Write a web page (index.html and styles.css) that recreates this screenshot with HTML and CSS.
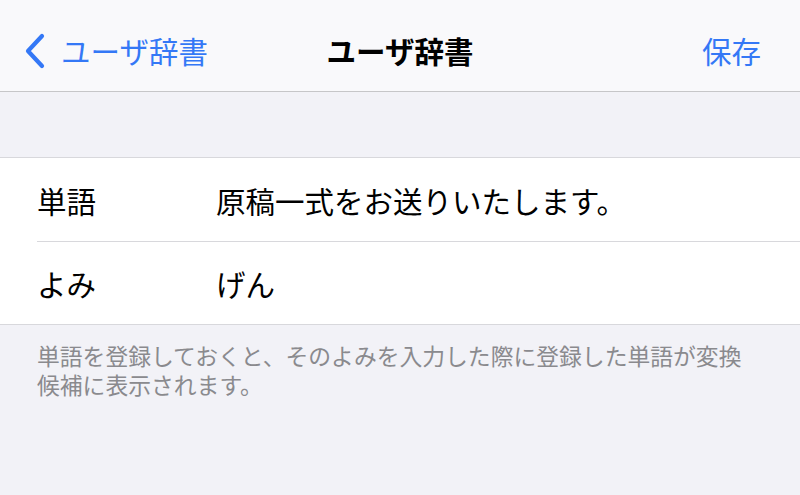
FILE: index.html
```html
<!DOCTYPE html>
<html lang="ja">
<head>
    <meta charset="UTF-8">
    <title>ユーザ辞書</title>
    <link rel="stylesheet" href="styles.css">
</head>
<body>
<div class="nav">
    <a class="back">
        <svg class="chev" width="22" height="36" viewBox="0 0 22 36">
            <path d="M18 3 L4 18 L18 33" fill="none" stroke="#3478f6" stroke-width="4.2" stroke-linecap="round" stroke-linejoin="round"/>
        </svg>
        <span>ユーザ辞書</span>
    </a>
    <h1 class="title">ユーザ辞書</h1>
    <a class="save">保存</a>
</div>
<div class="gap"></div>
<div class="table">
    <div class="row">
        <span class="label">単語</span>
        <span class="value">原稿一式をお送りいたします。</span>
    </div>
    <div class="row">
        <span class="label">よみ</span>
        <span class="value">げん</span>
    </div>
</div>
<p class="foot">単語を登録しておくと、そのよみを入力した際に登録した単語が変換<br>候補に表示されます。</p>
</body>
</html>
```

FILE: styles.css
```css
*{margin:0;padding:0;box-sizing:border-box;}
body{background:#f2f2f7;font-family:"Noto Sans CJK JP","Noto Sans",sans-serif;color:#000;width:800px;height:495px;overflow:hidden;}
.nav{height:92px;background:#f9f9fb;border-bottom:1px solid #c6c6c8;display:flex;align-items:center;justify-content:space-between;padding:10px 39px 0 24px;position:relative;}
.back{display:flex;align-items:center;color:#3478f6;font-size:29.5px;line-height:1;}
.chev{margin-right:15px;margin-top:1px;}
.title{position:absolute;left:0;right:0;top:10px;bottom:0;display:flex;align-items:center;justify-content:center;font-size:29.5px;font-weight:700;line-height:1;pointer-events:none;}
.save{color:#3478f6;font-size:29.5px;line-height:1;}
.gap{height:65px;}
.table{background:#fff;border-top:1px solid #d8d8dc;border-bottom:1px solid #d8d8dc;}
.row{height:83px;display:flex;align-items:center;margin-left:37px;padding-top:2px;font-size:29.5px;line-height:1;}
.row + .row{border-top:1px solid #d8d8dc;}
.label{width:179px;}
.foot{padding:16px 37px 0;font-size:22.8px;line-height:29px;color:#8a8a8e;}
```
